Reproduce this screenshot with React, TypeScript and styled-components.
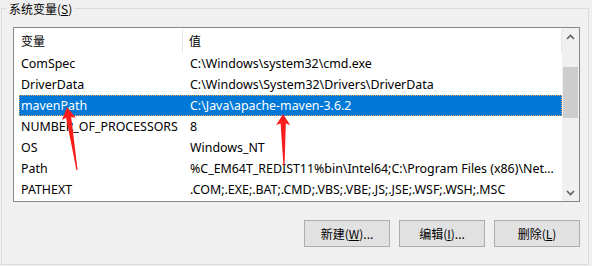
import React from 'react';
import styled, { createGlobalStyle } from 'styled-components';

const GlobalStyle = createGlobalStyle`
  html, body {
    margin: 0;
    padding: 0;
    background: #f0f0f0;
  }
  body {
    font-family: 'Segoe UI', 'Noto Sans', 'Noto Sans CJK SC', sans-serif;
    font-size: 12px;
    color: #000;
  }
`;

const Page = styled.div`
  position: relative;
  width: 592px;
  height: 266px;
  padding: 0 3px 0 1px;
  box-sizing: border-box;
`;

const GroupBox = styled.fieldset`
  margin: 0;
  width: 588px;
  height: 265px;
  box-sizing: border-box;
  border: 1px solid #dcdcdc;
  padding: 10px 8px 0 11px;
  display: flex;
  flex-direction: column;
  min-width: 0;
`;

const GroupTitle = styled.legend`
  margin-left: -6px;
  padding: 0 2px;
  height: 17px;
  line-height: 17px;
  font-family: 'Microsoft YaHei UI', 'Noto Sans CJK SC', sans-serif;
  font-size: 12px;
  color: #000;
`;

const ListView = styled.div`
  display: flex;
  height: 175px;
  box-sizing: border-box;
  border: 1px solid #828790;
  background: #fff;
`;

const Table = styled.div`
  flex: 1;
  min-width: 0;
  display: flex;
  flex-direction: column;
  overflow: hidden;
`;

const HeaderRow = styled.div`
  display: flex;
  height: 25px;
  padding-left: 5px;
`;

const HeaderCell = styled.div<{ $width?: number }>`
  ${({ $width }) => ($width ? `width: ${$width}px; flex: none;` : 'flex: 1;')}
  box-sizing: border-box;
  margin: 1px 0;
  padding-left: ${({ $width }) => ($width ? 2 : 6)}px;
  line-height: 23px;
  border-right: 1px solid #e5e5e5;
  font-family: 'Microsoft YaHei UI', 'Noto Sans CJK SC', sans-serif;
`;

const Row = styled.div<{ $selected?: boolean }>`
  display: flex;
  height: 21px;
  margin-left: 5px;
  box-sizing: border-box;
  font-size: 12.4px;
  line-height: 19px;
  white-space: nowrap;
  background: ${({ $selected }) => ($selected ? '#0078d7' : 'transparent')};
  color: ${({ $selected }) => ($selected ? '#fff' : '#000')};
  border: 1px ${({ $selected }) => ($selected ? 'dotted #e7a35a' : 'solid transparent')};
`;

const NameCell = styled.div`
  width: 164px;
  flex: none;
  box-sizing: border-box;
  padding-left: 1px;
  overflow: hidden;
`;

const ValueCell = styled.div`
  flex: 1;
  min-width: 0;
  padding-left: 6px;
  overflow: hidden;
`;

const ScrollBar = styled.div`
  width: 17px;
  flex: none;
  display: flex;
  flex-direction: column;
  background: #f0f0f0;
`;

const ScrollButton = styled.div`
  height: 17px;
  display: flex;
  align-items: center;
  justify-content: center;
`;

const Track = styled.div`
  flex: 1;
  padding: 0 1px;
`;

const Thumb = styled.div`
  margin-top: 22px;
  height: 51px;
  background: #cdcdcd;
`;

const ButtonBar = styled.div`
  display: flex;
  justify-content: flex-end;
  gap: 9px;
  margin-top: 18px;
`;

const Button = styled.button`
  width: 86px;
  height: 27px;
  box-sizing: border-box;
  margin: 0;
  padding: 0;
  border: 1px solid #adadad;
  background: #e1e1e1;
  color: #000;
  font-family: 'Microsoft YaHei UI', 'Noto Sans CJK SC', sans-serif;
  font-size: 12px;
  line-height: 25px;
`;

const Overlay = styled.svg`
  position: absolute;
  left: 0;
  top: 0;
  pointer-events: none;
`;

const Chevron: React.FC<{ down?: boolean }> = ({ down }) => (
  <svg width="9" height="6" viewBox="0 0 9 6">
    <path
      d={down ? 'M1 1 L4.5 4.5 L8 1' : 'M1 5 L4.5 1.5 L8 5'}
      fill="none"
      stroke="#606060"
      strokeWidth="1.6"
    />
  </svg>
);

// builds a tapered red arrow from tip to tail
const arrowPoints = (tip: [number, number], tail: [number, number], head = 12, half = 7) => {
  const dx = tail[0] - tip[0];
  const dy = tail[1] - tip[1];
  const len = Math.hypot(dx, dy);
  const ux = dx / len;
  const uy = dy / len;
  const px = uy;
  const py = -ux;
  const bx = tip[0] + ux * head;
  const by = tip[1] + uy * head;
  const nx = tip[0] + ux * (head - 1.5);
  const ny = tip[1] + uy * (head - 1.5);
  const pts = [
    tip,
    [bx + px * half, by + py * half],
    [nx + px * 2.6, ny + py * 2.6],
    [tail[0] + px * 0.6, tail[1] + py * 0.6],
    [tail[0] - px * 0.6, tail[1] - py * 0.6],
    [nx - px * 2.6, ny - py * 2.6],
    [bx - px * half, by - py * half],
  ];
  return pts.map((p) => `${p[0].toFixed(1)},${p[1].toFixed(1)}`).join(' ');
};

const rows = [
  { name: 'ComSpec', value: 'C:\\Windows\\system32\\cmd.exe' },
  { name: 'DriverData', value: 'C:\\Windows\\System32\\Drivers\\DriverData' },
  { name: 'mavenPath', value: 'C:\\Java\\apache-maven-3.6.2', selected: true },
  { name: 'NUMBER_OF_PROCESSORS', value: '8' },
  { name: 'OS', value: 'Windows_NT' },
  { name: 'Path', value: '%C_EM64T_REDIST11%bin\\Intel64;C:\\Program Files (x86)\\Net...' },
  { name: 'PATHEXT', value: '.COM;.EXE;.BAT;.CMD;.VBS;.VBE;.JS;.JSE;.WSF;.WSH;.MSC' },
];

const App: React.FC = () => (
  <Page>
    <GlobalStyle />
    <GroupBox>
      <GroupTitle>
        系统变量(<u>S</u>)
      </GroupTitle>
      <ListView>
        <Table>
          <HeaderRow>
            <HeaderCell $width={164}>变量</HeaderCell>
            <HeaderCell>值</HeaderCell>
          </HeaderRow>
          {rows.map((r) => (
            <Row key={r.name} $selected={r.selected}>
              <NameCell>{r.name}</NameCell>
              <ValueCell>{r.value}</ValueCell>
            </Row>
          ))}
        </Table>
        <ScrollBar>
          <ScrollButton>
            <Chevron />
          </ScrollButton>
          <Track>
            <Thumb />
          </Track>
          <ScrollButton>
            <Chevron down />
          </ScrollButton>
        </ScrollBar>
      </ListView>
      <ButtonBar>
        <Button>
          新建(<u>W</u>)...
        </Button>
        <Button>
          编辑(<u>I</u>)...
        </Button>
        <Button>
          删除(<u>L</u>)
        </Button>
      </ButtonBar>
    </GroupBox>
    <Overlay width="592" height="266">
      <polygon points={arrowPoints([67, 107], [77, 170])} fill="#f81e1e" />
      <polygon points={arrowPoints([283, 114], [284, 165], 11, 7)} fill="#f81e1e" />
    </Overlay>
  </Page>
);

export default App;
